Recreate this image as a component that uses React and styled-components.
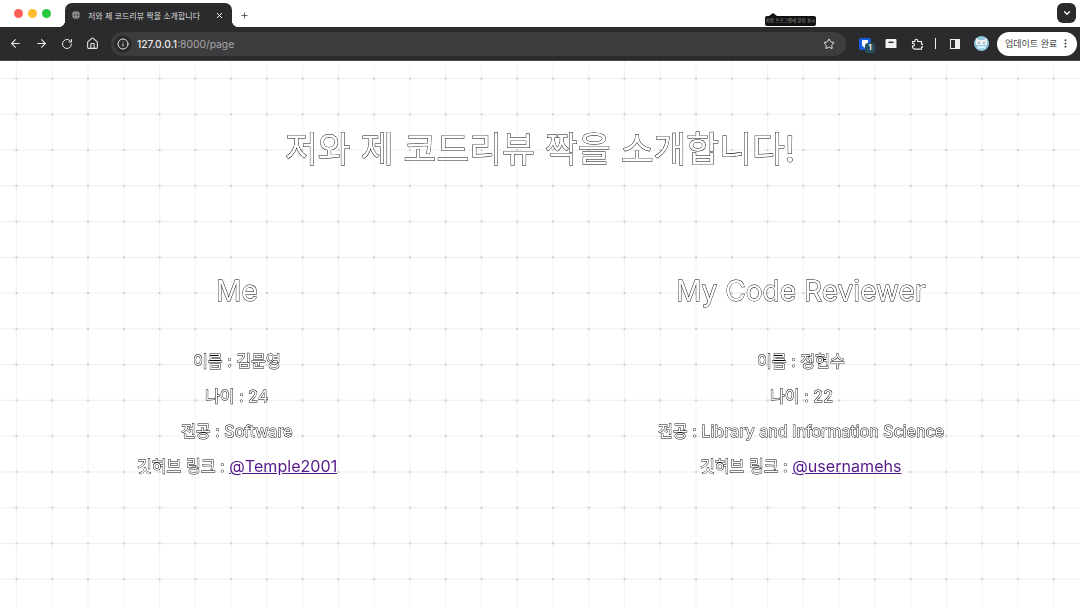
import React from 'react'
import styled, { createGlobalStyle, css } from 'styled-components'
import { ArrowLeft, ArrowRight, RotateCw, Home, Info, Star, Plus, X, ChevronDown, Globe, EllipsisVertical } from 'lucide-react'

const GlobalStyle = createGlobalStyle`
	html, body {
		margin: 0;
		padding: 0;
		background: #fff;
	}
	body {
		font-family: Inter, "Noto Sans CJK KR", sans-serif;
	}
`

const people = [
	{
		heading: 'Me',
		name: '김문영',
		age: 24,
		major: 'Software',
		github: '@Temple2001',
	},
	{
		heading: 'My Code Reviewer',
		name: '정현수',
		age: 22,
		major: 'Library and Information Science',
		github: '@usernamehs',
	},
]

const App = () => {
	return (
		<Window>
			<GlobalStyle />
			<TabStrip>
				<Lights>
					<Light color='#ff5f57' />
					<Light color='#febc2e' />
					<Light color='#28c840' />
				</Lights>
				<Tab>
					<Globe size={10} color='#2b2b2d' fill='#a8a8a8' strokeWidth={1.4} />
					<TabTitle>저와 제 코드리뷰 짝을 소개합니다</TabTitle>
					<X size={9} color='#fff' strokeWidth={2.6} />
				</Tab>
				<NewTab>
					<Plus size={9} strokeWidth={2} />
				</NewTab>
				<Tooltip>확장 프로그램에 알림 표시</Tooltip>
				<TabMenu>
					<ChevronDown size={10} color='#fff' strokeWidth={3} />
				</TabMenu>
			</TabStrip>

			<Toolbar>
				<NavIcons>
					<ArrowLeft size={13} strokeWidth={2} />
					<ArrowRight size={13} strokeWidth={2} />
					<RotateCw size={12} strokeWidth={2} />
					<Home size={13} strokeWidth={2} />
				</NavIcons>
				<Omnibox>
					<SiteInfo>
						<Info size={12} strokeWidth={2} />
					</SiteInfo>
					<Url>
						<b>127.0.0.1</b>:8000/page
					</Url>
					<Star size={12} strokeWidth={2} />
				</Omnibox>
				<Extensions>
					<BadgeIcon>
						<svg width='12' height='12' viewBox='0 0 12 12'>
							<rect width='12' height='12' rx='2' fill='#175ddc' />
							<path d='M3 2h6v4.5c0 1.6-1.6 2.6-3 3.3-1.4-.7-3-1.7-3-3.3z' fill='#fff' />
						</svg>
						<Badge>1</Badge>
					</BadgeIcon>
					<svg width='12' height='11' viewBox='0 0 12 11'>
						<path d='M1 1h10l.5 1v7.5l-.5.5H1l-.5-.5V2z' fill='#f2f2f2' />
						<rect x='3.5' y='3.6' width='5' height='1.4' fill='#2b2b2b' />
					</svg>
					<svg width='12' height='12' viewBox='0 0 12 12' fill='none' stroke='#eee' strokeWidth='1.1'>
						<path d='M1.5 3.5h2.4V2.6a1.4 1.4 0 0 1 2.8 0v.9h3.8v2.6h.4a1.5 1.5 0 0 1 0 3h-.4v2H3.6L1.5 9.6V8h.6a1.3 1.3 0 0 0 0-2.6h-.6z' />
					</svg>
					<Divider />
					<SidePanel />
					<Avatar>
						<svg width='15' height='15' viewBox='0 0 15 15'>
							<path d='M2 1.5l3 2.5h5l3-2.5v7.5H2z' fill='#e9eef0' />
							<circle cx='5' cy='7' r='.8' fill='#51707f' />
							<circle cx='10' cy='7' r='.8' fill='#51707f' />
							<path d='M3.5 10h8v2.5h-8z' fill='#d5f0f6' />
						</svg>
					</Avatar>
					<UpdatePill>
						<span>업데이트 완료</span>
						<EllipsisVertical size={11} strokeWidth={2.4} />
					</UpdatePill>
				</Extensions>
			</Toolbar>

			<Page>
				<Title>저와 제 코드리뷰 짝을 소개합니다!</Title>
				<Columns>
					{people.map(person => (
						<Column key={person.heading}>
							<Heading>{person.heading}</Heading>
							<Details>
								<Row>이름 : {person.name}</Row>
								<Row>나이 : {person.age}</Row>
								<Row>전공 : {person.major}</Row>
								<Row>
									깃허브 링크 : <ProfileLink href='#'>{person.github}</ProfileLink>
								</Row>
							</Details>
						</Column>
					))}
				</Columns>
			</Page>
		</Window>
	)
}

export default App

// white letters with a thin dark edge, as the reference shows them
const hollowText = css`
	color: #fff;
	-webkit-text-stroke: 0.9px #000;
	paint-order: stroke fill;
	will-change: transform;
`

const Window = styled.div`
	width: 1080px;
	height: 608px;
	overflow: hidden;
	display: flex;
	flex-direction: column;
`

const TabStrip = styled.div`
	position: relative;
	height: 27px;
	background: #fff;
	display: flex;
	align-items: flex-end;
`

const Lights = styled.div`
	display: flex;
	gap: 5.3px;
	width: 65px;
	height: 27px;
	padding: 8.5px 0 0 13.5px;
	box-sizing: border-box;
`

const Light = styled.span`
	width: 9px;
	height: 9px;
	border-radius: 50%;
	background: ${props => props.color};
`

const Tab = styled.div`
	position: relative;
	width: 167px;
	height: 24px;
	box-sizing: border-box;
	padding: 0 8px 0 6px;
	display: flex;
	align-items: center;
	gap: 7px;
	background: #2b2b2d;
	border-radius: 7px 7px 0 0;

	&::before, &::after {
		content: '';
		position: absolute;
		bottom: 0;
		width: 7px;
		height: 7px;
	}

	&::before {
		left: -7px;
		background: radial-gradient(circle at 0 0, #fff 7px, #2b2b2d 7.5px);
	}

	&::after {
		right: -7px;
		background: radial-gradient(circle at 100% 0, #fff 7px, #2b2b2d 7.5px);
	}
`

const TabTitle = styled.span`
	flex: 1;
	font-size: 8px;
	color: #ddd;
	white-space: nowrap;
`

const NewTab = styled.div`
	margin: 0 0 7px 8px;
	width: 9px;
	color: #333;
	display: flex;
`

const Tooltip = styled.div`
	position: absolute;
	left: 765px;
	top: 16px;
	width: 51px;
	height: 10px;
	border-radius: 2px;
	background: #111;
	color: #999;
	font-size: 4.5px;
	line-height: 10px;
	text-align: center;
	white-space: nowrap;

	&::before {
		content: '';
		position: absolute;
		left: 4px;
		top: -3px;
		border: 4px solid transparent;
		border-top: 0;
		border-bottom: 3px solid #111;
	}
`

const TabMenu = styled.div`
	position: absolute;
	left: 1057px;
	top: 3px;
	width: 19px;
	height: 20px;
	border-radius: 6px;
	background: #2b2b2d;
	display: flex;
	align-items: center;
	justify-content: center;
`

const Toolbar = styled.div`
	height: 34px;
	box-sizing: border-box;
	background: #2b2b2d;
	border-bottom: 1px solid #4a4a4a;
	color: #e6e6e6;
	display: flex;
	align-items: center;
`

const NavIcons = styled.div`
	width: 111px;
	box-sizing: border-box;
	padding-left: 9px;
	display: flex;
	align-items: center;
	gap: 13px;
`

const Omnibox = styled.div`
	width: 735px;
	height: 24px;
	border-radius: 12px;
	background: #3d3d3f;
	display: flex;
	align-items: center;
	padding-right: 11px;
	box-sizing: border-box;
`

const SiteInfo = styled.div`
	width: 18px;
	height: 18px;
	margin: 0 5px 0 3px;
	border-radius: 50%;
	background: #2b2b2d;
	display: flex;
	align-items: center;
	justify-content: center;
`

const Url = styled.div`
	flex: 1;
	font-size: 10.3px;
	color: #a8a8a8;

	b {
		color: #e8e8e8;
		font-weight: 500;
	}
`

const Extensions = styled.div`
	flex: 1;
	display: flex;
	align-items: center;
	gap: 14px;
	padding-left: 13px;
`

const BadgeIcon = styled.div`
	position: relative;
	display: flex;
`

const Badge = styled.span`
	position: absolute;
	left: 6px;
	top: 5px;
	width: 10px;
	height: 10px;
	border-radius: 3px;
	background: #27505f;
	color: #fff;
	font-size: 7px;
	font-weight: 700;
	line-height: 10px;
	text-align: center;
`

const Divider = styled.span`
	width: 1px;
	height: 11px;
	margin-left: -2px;
	background: #eee;
`

const SidePanel = styled.span`
	width: 10px;
	height: 10px;
	box-sizing: border-box;
	border: 1px solid #eee;
	background: linear-gradient(90deg, transparent 50%, #eee 50%);
`

const Avatar = styled.div`
	width: 15px;
	height: 15px;
	border-radius: 50%;
	overflow: hidden;
	background: #8fc7dd;
	display: flex;
`

const UpdatePill = styled.div`
	width: 80px;
	height: 24px;
	margin-left: -6px;
	padding: 0 6px 0 8px;
	box-sizing: border-box;
	border-radius: 12px;
	background: #fff;
	color: #444;
	font-size: 9px;
	display: flex;
	align-items: center;
	justify-content: space-between;
	white-space: nowrap;
`

const Page = styled.main`
	flex: 1;
	display: flex;
	flex-direction: column;
	align-items: center;
	background-color: #fff;
	background-image:
		radial-gradient(circle, #cfcfcf 1px, transparent 1.5px),
		linear-gradient(#efefef 1px, transparent 1px),
		linear-gradient(90deg, #f3f3f3 1px, transparent 1px);
	background-size: 35.78px 35.78px;
	background-position: -1.39px -0.39px, 0 17px, 16px 0;
`

const Title = styled.h1`
	margin: 66px 0 0;
	font-size: 35.7px;
	line-height: 44px;
	font-weight: 400;
	${hollowText}
`

const Columns = styled.div`
	margin-top: 103px;
	padding-left: 1px;
	display: flex;
	justify-content: center;
	gap: 321px;
`

const Column = styled.section`
	display: flex;
	flex-direction: column;
	align-items: center;
`

const Heading = styled.h2`
	margin: 0;
	font-size: 28.1px;
	line-height: 34px;
	font-weight: 400;
	${hollowText}
`

const Details = styled.div`
	margin-top: 42px;
	display: flex;
	flex-direction: column;
	align-items: center;
	gap: 13px;
`

const Row = styled.p`
	margin: 0;
	font-size: 16.1px;
	line-height: 22px;
	white-space: nowrap;
	${hollowText}
`

const ProfileLink = styled.a`
	color: #551a8b;
	-webkit-text-stroke: 0;
`
